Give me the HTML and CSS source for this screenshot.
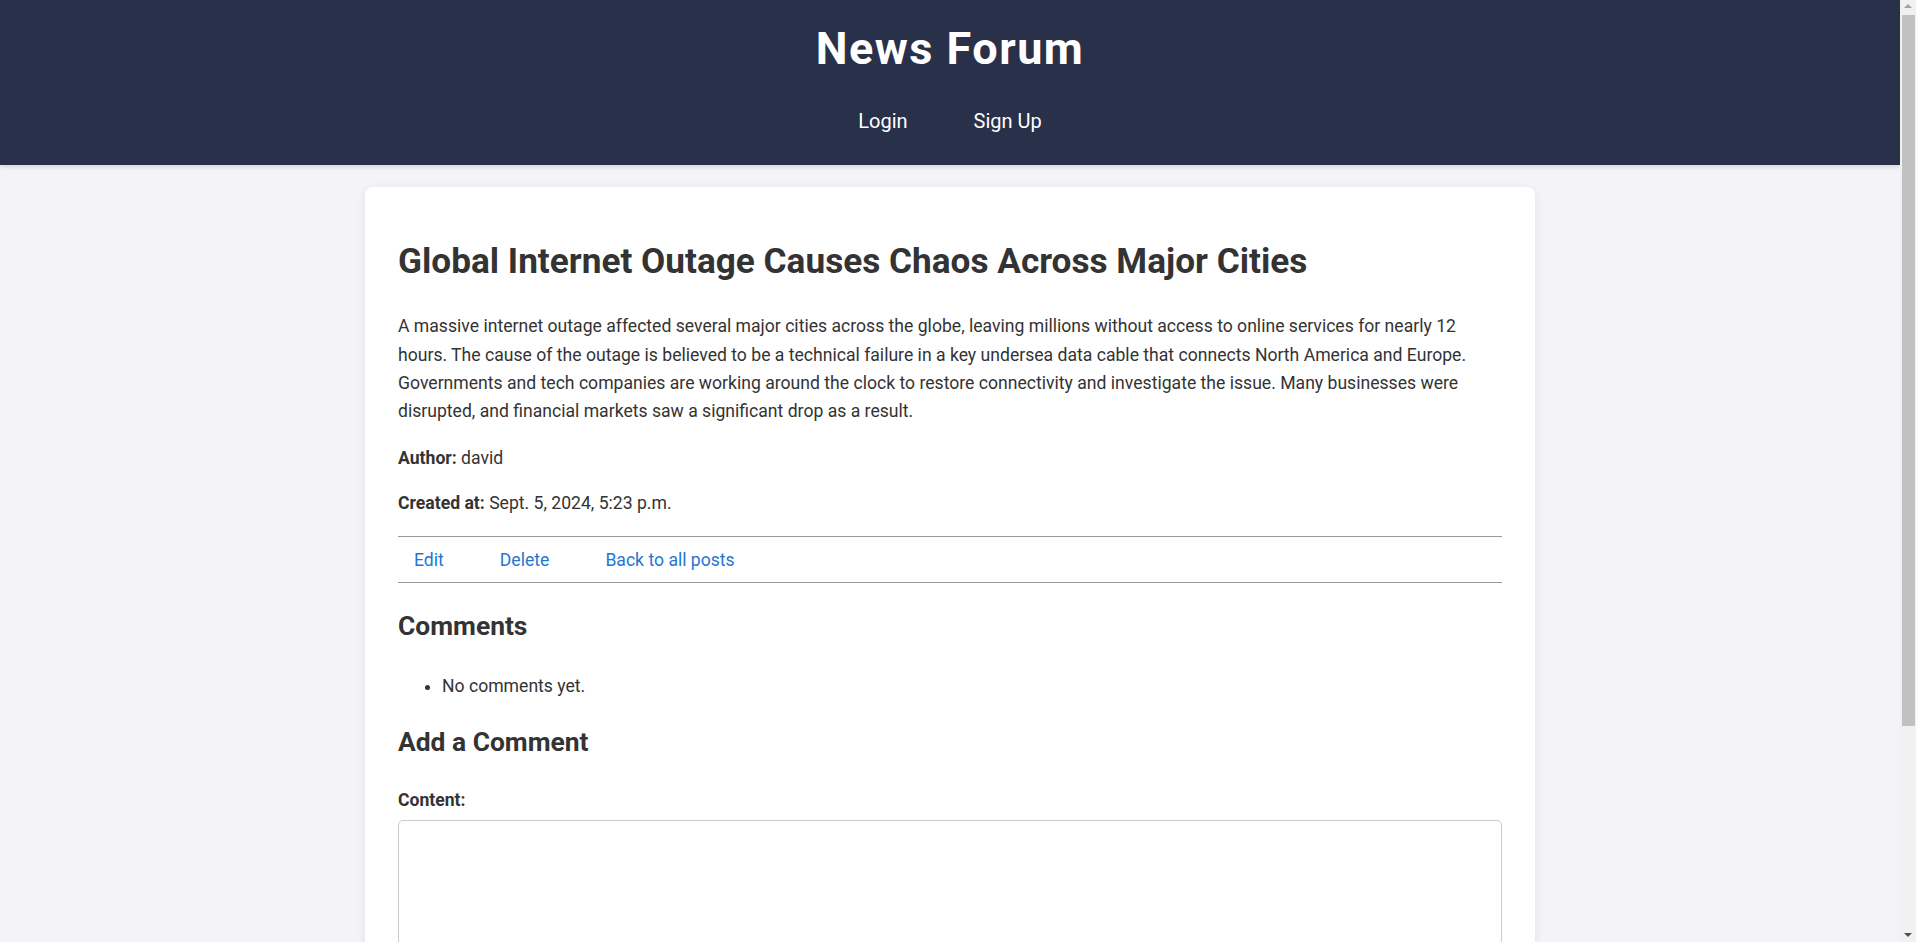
FILE: index.html
```html
<!DOCTYPE html>
<html lang="en">
<head>
<meta charset="utf-8">
<title>News Forum</title>
<link rel="stylesheet" href="styles.css">
</head>
<body>
<header class="site-header">
  <h1 class="site-title">News Forum</h1>
  <nav class="site-nav">
    <a href="#" class="nav-link">Login</a>
    <a href="#" class="nav-link">Sign Up</a>
  </nav>
</header>
<main class="card">
  <h1 class="post-title">Global Internet Outage Causes Chaos Across Major Cities</h1>
  <p class="post-body">A massive internet outage affected several major cities across the globe, leaving millions without access to online services for nearly 12 hours. The cause of the outage is believed to be a technical failure in a key undersea data cable that connects North America and Europe. Governments and tech companies are working around the clock to restore connectivity and investigate the issue. Many businesses were disrupted, and financial markets saw a significant drop as a result.</p>
  <p class="meta"><strong>Author:</strong> david</p>
  <p class="meta"><strong>Created at:</strong> Sept. 5, 2024, 5:23 p.m.</p>
  <div class="actions">
    <a href="#" class="action-link">Edit</a>
    <a href="#" class="action-link">Delete</a>
    <a href="#" class="action-link">Back to all posts</a>
  </div>
  <h2 class="section-title">Comments</h2>
  <ul class="comments">
    <li>No comments yet.</li>
  </ul>
  <h2 class="section-title section-title--form">Add a Comment</h2>
  <form class="comment-form">
    <label class="field-label" for="content">Content:</label>
    <textarea id="content" class="field-input" rows="10"></textarea>
    <button type="submit" class="submit-btn">Submit</button>
  </form>
</main>
<div class="scrollbar" aria-hidden="true">
  <span class="scroll-arrow scroll-arrow--up"></span>
  <span class="scroll-thumb"></span>
  <span class="scroll-arrow scroll-arrow--down"></span>
</div>
</body>
</html>
```
FILE: styles.css
```css
html, body {
  margin: 0;
  padding: 0;
}
body {
  background: #f4f4f8;
  font-family: Roboto, "Liberation Sans", Arial, sans-serif;
  font-size: 16px;
  line-height: 1.6;
  color: #333;
  padding-right: 16px;
}
.site-header {
  background: #29304a;
  color: #fff;
  text-align: center;
  padding: 22.6px 0 19.8px;
  box-shadow: 0 2px 4px rgba(0, 0, 0, 0.12);
}
.site-title {
  margin: 0 0 22.5px;
  font-size: 45px;
  line-height: 1.172;
  font-weight: 700;
  letter-spacing: 1.5px;
}
.site-nav {
  display: flex;
  justify-content: center;
  gap: 38px;
  line-height: 1.172;
}
.nav-link {
  color: #fff;
  text-decoration: none;
  font-size: 20px;
  font-weight: 400;
  padding: 12px 14px;
}
.card {
  display: block;
  width: 1104px;
  margin: 22px auto 40px;
  padding: 33px;
  background: #fff;
  border-radius: 8px;
  box-shadow: 0 2px 10px rgba(0, 0, 0, 0.08);
}
.post-title {
  margin: 19.8px 0 30.4px;
  font-size: 35.2px;
  line-height: 1.2;
  font-weight: 700;
  color: #333;
}
.post-body,
.meta {
  font-size: 17.6px;
  line-height: 1.6;
  margin: 17.6px 0;
}
.post-body {
  margin-top: 0;
  margin-bottom: 18.6px;
}
.meta strong {
  font-weight: 700;
}
.actions {
  display: flex;
  gap: 24px;
  border-top: 1px solid #999;
  border-bottom: 1px solid #999;
  padding: 9px 0 8px;
  margin-top: 18.5px;
}
.action-link {
  color: #1f77d0;
  text-decoration: none;
  font-size: 17.6px;
  line-height: 1.6;
  padding: 0 16px;
}
.section-title {
  font-size: 26.4px;
  line-height: 1.2;
  font-weight: 700;
  margin: 28.2px 0 29.2px;
  color: #333;
}
.section-title--form {
  margin-top: 26.4px;
  margin-bottom: 27.4px;
}
.comments {
  margin: 0;
  padding-left: 44px;
  font-size: 17.6px;
  line-height: 1.6;
}
.comment-form {
  display: flex;
  flex-direction: column;
  align-items: flex-start;
}
.field-label {
  font-size: 17.6px;
  line-height: 1.6;
  font-weight: 700;
  margin-bottom: 6.5px;
}
.field-input {
  box-sizing: border-box;
  width: 100%;
  height: 240px;
  border: 1px solid #ccc;
  border-radius: 5px;
  font-family: inherit;
  font-size: 16px;
  padding: 10px;
  resize: vertical;
}
.submit-btn {
  margin-top: 16px;
  background: #29304a;
  color: #fff;
  border: none;
  border-radius: 5px;
  font-family: inherit;
  font-size: 16px;
  padding: 10px 20px;
}
.scrollbar {
  position: fixed;
  top: 0;
  right: 0;
  width: 16px;
  height: 100vh;
  background: #f1f1f1;
}
.scroll-thumb {
  position: absolute;
  top: 15px;
  left: 2px;
  right: 1px;
  height: 711px;
  background: #c1c1c1;
}
.scroll-arrow {
  position: absolute;
  left: 4px;
  width: 0;
  height: 0;
  border-left: 4px solid transparent;
  border-right: 4px solid transparent;
}
.scroll-arrow--up {
  top: 4px;
  border-bottom: 4px solid #a3a3a3;
}
.scroll-arrow--down {
  bottom: 5px;
  border-top: 4px solid #505050;
}
```
